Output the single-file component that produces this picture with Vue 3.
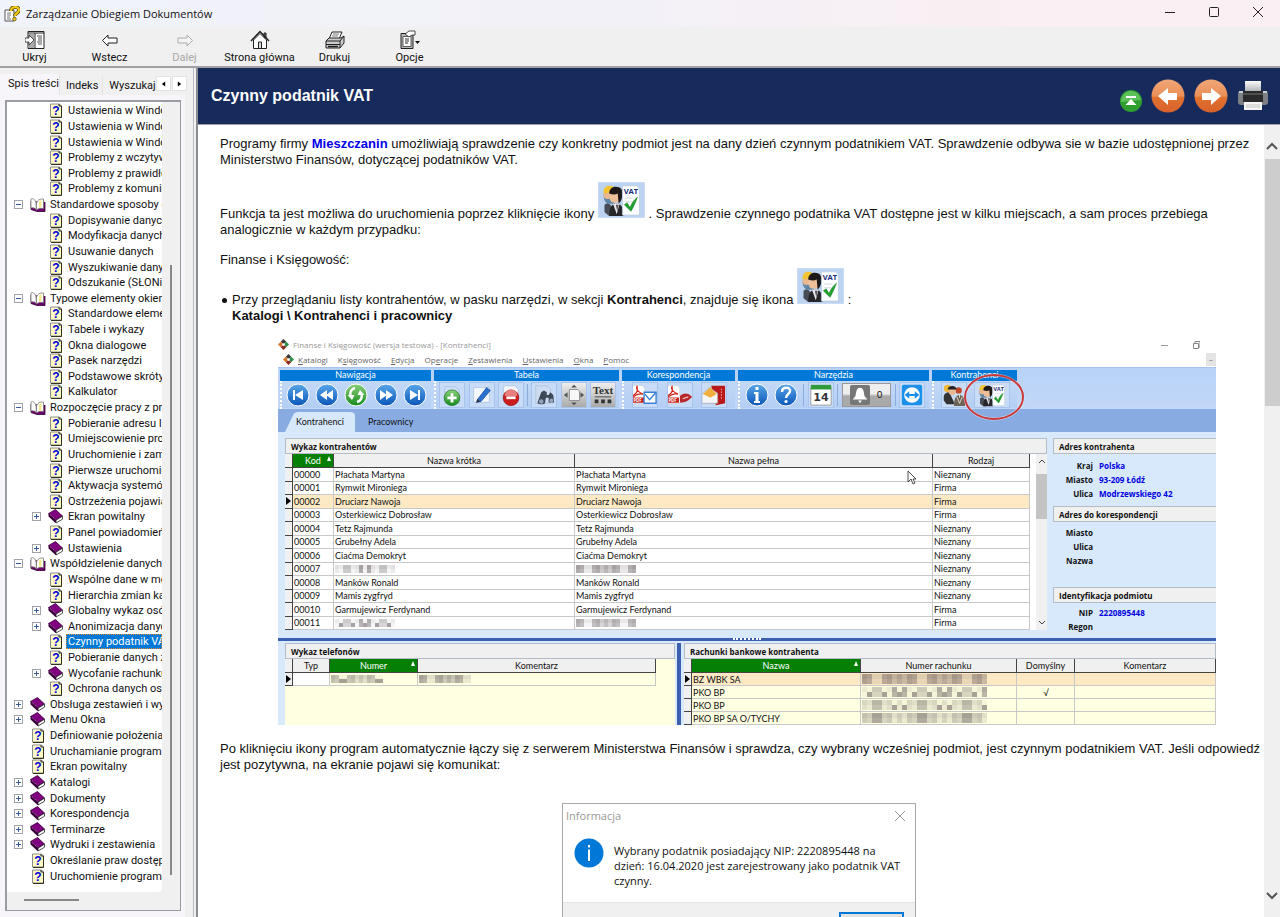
<template>
  <div class="window">
    <svg class="sprite" width="0" height="0" aria-hidden="true">
      <defs>
        <linearGradient id="g-blue" x1="0" y1="0" x2="0" y2="1">
          <stop offset="0" stop-color="#5aa7ea" />
          <stop offset="1" stop-color="#0a55b8" />
        </linearGradient>
        <linearGradient id="g-green" x1="0" y1="0" x2="0" y2="1">
          <stop offset="0" stop-color="#8bd07a" />
          <stop offset="1" stop-color="#148a1c" />
        </linearGradient>
        <linearGradient id="g-orange" x1="0" y1="0" x2="0" y2="1">
          <stop offset="0" stop-color="#f0a878" />
          <stop offset="0.5" stop-color="#ea8f58" />
          <stop offset="0.55" stop-color="#e07030" />
          <stop offset="1" stop-color="#d9622a" />
        </linearGradient>
        <linearGradient id="g-metal" x1="0" y1="0" x2="0" y2="1">
          <stop offset="0" stop-color="#fafafa" />
          <stop offset="1" stop-color="#a4a8ac" />
        </linearGradient>
      </defs>
      <symbol id="i-page" viewBox="0 0 16 15">
        <path d="M2.500 1h9l2 2v11h-11z" fill="#fffbc4" stroke="#8c8c8c" />
        <path d="M13.500 3v11.500H3" fill="none" stroke="#33331c" />
        <path d="M11 1v2h2.500" fill="none" stroke="#222" />
        <text x="8" y="12" text-anchor="middle" font-family="Liberation Sans, sans-serif" font-size="12" font-weight="700" fill="#0000d8">?</text>
      </symbol>
      <symbol id="i-book" viewBox="0 0 16 15">
        <path d="M0.500 4.500L7.500 .5l7 6.500L8 11z" fill="#800080" stroke="#3a003a" stroke-width="0.800" />
        <path d="M.5 4.500v3L7.500 14l.8-.5V11z" fill="#3a003a" />
        <path d="M8 11.200l6.500-4v3L8 14z" fill="#fff" stroke="#222" stroke-width="0.800" />
        <path d="M2 5.500l6 5" stroke="#c080c0" stroke-width="0.800" stroke-dasharray="1 1" />
      </symbol>
      <symbol id="i-open" viewBox="0 0 16 15">
        <path d="M1 4v8.500l6 2h8V5" fill="#700070" stroke="#300030" stroke-width="0.800" />
        <path d="M1 2c2-1 4.500.5 5 4l.5 7C5.500 11 3.500 10.500 1 11z" fill="#fff" stroke="#777" stroke-width="0.800" />
        <path d="M6.500 13V6C7.500 3 10 1.500 13.500 2v9.500c-3-.5-5.500 0-7 1.500z" fill="#fff" stroke="#777" stroke-width="0.800" />
        <path d="M9 4.500l2.500-1.500v7L9 11z" fill="#f3e88a" />
      </symbol>
      <symbol id="i-vat" viewBox="0 0 44 36">
        <path d="M3 12c0 5 1 8 4 10h8V10z" fill="#5f86a4" />
        <circle cx="7" cy="13" r="4" fill="#e8b890" />
        <path d="M3 9c0-4 3-6 6-6s5 1 5 3l-5 4-6 1z" fill="#f2c431" />
        <path d="M4 23c2-2 5-2 7 1l2 11H9l-5-4z" fill="#484c54" />
        <path d="M9 35c0-9 2-13 8-13 5 0 7 4 7 13z" fill="#26262a" />
        <path d="M13 22l4 11 3-11z" fill="#e8e8ee" />
        <path d="M16 23l1.500 7 1.500-7z" fill="#555" />
        <circle cx="15" cy="15" r="6" fill="#eec09a" />
        <path d="M9 11c0-5 4-7 7-7 5 0 8 3 7 10-1 4-2 6-4 8l-1-11c-3 2-6 1-9 0z" fill="#1d1919" />
        <path d="M23 3h15l3 3v28H23z" fill="#fdfeff" stroke="#b8c8dc" stroke-width="0.800" />
        <path d="M26 16h8M26 20h7M26 24h4" stroke="#d0d6de" />
        <text x="32" y="12" text-anchor="middle" font-family="Open Sans, sans-serif" font-size="8" font-weight="700" fill="#1a2f7a">VAT</text>
        <path d="M25 23l3-2 3 5c2-5 4-8 8-11-2 5-4 10-7 15z" fill="#1fa32c" stroke="#0c7018" stroke-width="0.500" />
      </symbol>
      <symbol id="i-pdf" viewBox="0 0 28 26">
        <path d="M2 2h12l3 3v18H2z" fill="#fdfdfd" stroke="#c8c8d0" stroke-width="0.700" />
        <path d="M4 13c4-2 5-6 4-10-2 2 1 7 7 9-5-1-9 1-11 3z" fill="none" stroke="#d0281c" stroke-width="1.300" />
        <path d="M1 16h15v6H1z" fill="#c8201c" />
        <text x="8.500" y="21" text-anchor="middle" font-family="Open Sans, sans-serif" font-size="5" font-weight="700" fill="#fff">PDF</text>
      </symbol>
      <symbol id="i-logo" viewBox="0 0 12 12">
        <path d="M6 0l3 3-3 3-3-3z" fill="#3a3a3a" />
        <path d="M9 3l3 3-3 3-3-3z" fill="#2f8f4a" />
        <path d="M3 3l3 3-3 3-3-3z" fill="#d8762a" />
        <path d="M6 6l3 3-3 3-3-3z" fill="#8c2c22" />
        <circle cx="6" cy="6" r="1.500" fill="#fff" />
      </symbol>
    </svg>

    <header class="titlebar">
      <svg class="app-icon" viewBox="0 0 16 16">
        <path d="M1 4h9v11H1z" fill="#fff" stroke="#555" />
        <path d="M3 7h4M3 9h4M3 11h3M3 13h4" stroke="#777" />
        <path d="M7 5c0-5 8-5 8-1 0 3-4 3-4 6" fill="none" stroke="#5c4a00" stroke-width="3.600" />
        <path d="M7 5c0-5 8-5 8-1 0 3-4 3-4 6" fill="none" stroke="#f0c818" stroke-width="2.200" />
        <circle cx="10.500" cy="13" r="1.800" fill="#f0c818" stroke="#5c4a00" stroke-width="0.700" />
      </svg>
      <span class="title">Zarządzanie Obiegiem Dokumentów</span>
      <div class="win-buttons">
        <button type="button" aria-label="Minimalizuj">
          <svg viewBox="0 0 12 12"><path d="M1 6.500h10" stroke="#222" /></svg>
        </button>
        <button type="button" aria-label="Maksymalizuj">
          <svg viewBox="0 0 12 12"><rect x="1.500" y="1.500" width="9" height="9" rx="1" fill="none" stroke="#222" /></svg>
        </button>
        <button type="button" aria-label="Zamknij">
          <svg viewBox="0 0 12 12"><path d="M1 1l10 10M11 1L1 11" stroke="#222" /></svg>
        </button>
      </div>
    </header>

    <nav class="toolbar">
      <button v-for="b in toolButtons" :key="b.id" type="button" class="tool" :disabled="b.disabled">
        <svg v-if="b.id === 'hide'" viewBox="0 0 20 20">
          <path d="M3 1.500h16v17H3z" fill="#fff" stroke="#222" />
          <path d="M3 3h16" stroke="#222" />
          <path d="M4 4h5v14H4z" fill="#aaa" />
          <path d="M10 3v15" stroke="#222" />
          <path d="M12 6h5M13 8h4M13 10h4M12 12h5M13 14h4" stroke="#555" />
          <path d="M0 8h4V5l5 5-5 5v-3H0z" fill="#fff" stroke="#222" stroke-width="0.800" />
        </svg>
        <svg v-else-if="b.id === 'back'" viewBox="0 0 20 20">
          <path d="M8 5v3h9v5H8v3l-5.500-5.500z" fill="#fff" stroke="#222" />
        </svg>
        <svg v-else-if="b.id === 'forward'" viewBox="0 0 20 20">
          <path d="M12 5v3H3v5h9v3l5.500-5.500z" fill="#f4f4f4" stroke="#aaa" />
        </svg>
        <svg v-else-if="b.id === 'home'" viewBox="0 0 20 20">
          <path d="M14 3h2v5h-2z" fill="#777" stroke="#222" />
          <path d="M3.500 10v8.500h13V10L10 3.500z" fill="#fff" stroke="#222" />
          <path d="M1 11l9-9.500L19 11" fill="none" stroke="#222" stroke-width="1.500" />
          <path d="M8.500 18v-6h3v6" fill="#ddd" stroke="#222" />
        </svg>
        <svg v-else-if="b.id === 'print'" viewBox="0 0 20 20">
          <path d="M7 2h10l-3 7H4z" fill="#fff" stroke="#222" />
          <path d="M8 4h6M7 6h6" stroke="#777" />
          <path d="M1 11l3-3h12l3-2v7l-4 5H1z" fill="#ccc" stroke="#222" />
          <path d="M1 11h14l4-5M15 11v7M1 14.500h14" fill="none" stroke="#222" />
          <path d="M3 16.500h10" stroke="#222" stroke-width="1.500" />
        </svg>
        <svg v-else viewBox="0 0 20 20">
          <path d="M1 3.500h12v15H1z" fill="#bbb" stroke="#222" />
          <path d="M3 6.500h8v10H3z" fill="#fff" stroke="#222" stroke-width="0.700" />
          <path d="M5 9h4M5 11h4M5 13h3" stroke="#333" />
          <path d="M5 4l4-3h6v4h-3l-3 2z" fill="#fff" stroke="#222" stroke-width="0.800" />
          <path d="M15 11h5l-2.500 3z" fill="#111" />
        </svg>
        <span>{{ b.label }}</span>
      </button>
    </nav>

    <div class="body">
      <aside class="sidebar">
        <div class="tabs">
          <button type="button" class="tab active">Spis treści</button>
          <button type="button" class="tab">Indeks</button>
          <button type="button" class="tab">Wyszukaj</button>
          <div class="tab-scroll">
            <button type="button" aria-label="W lewo"><svg viewBox="0 0 6 6"><path d="M5 0v6L1 3z" /></svg></button>
            <button type="button" aria-label="W prawo"><svg viewBox="0 0 6 6"><path d="M1 0v6l4-3z" /></svg></button>
          </div>
        </div>
        <div class="tab-panel">
          <div class="tree-box">
            <ul class="tree">
              <li
                v-for="(n, i) in tree"
                :key="i"
                :class="['node', 'level-' + n.level, { selected: n.selected }]"
              >
                <button v-if="n.kind !== 'page'" type="button" class="expander" :aria-label="n.kind === 'open' ? 'Zwiń' : 'Rozwiń'">
                  <svg viewBox="0 0 7 7">
                    <path d="M1 3.500h5" stroke="#3a5a9a" />
                    <path v-if="n.kind === 'book'" d="M3.500 1v5" stroke="#3a5a9a" />
                  </svg>
                </button>
                <span v-else class="no-expander"></span>
                <svg class="node-icon"><use :href="'#i-' + n.kind" /></svg>
                <span class="node-label">{{ n.text }}</span>
              </li>
            </ul>
            <div class="tree-vscroll"><div class="vthumb"></div></div>
            <div class="tree-hscroll"><div class="hthumb"></div></div>
          </div>
        </div>
      </aside>
      <div class="splitter"></div>

      <main class="main">
        <div class="topic-bar">
          <h1>Czynny podatnik VAT</h1>
          <div class="topic-nav">
            <a href="#" aria-label="Do góry" class="small">
              <svg viewBox="0 0 22 22">
                <circle cx="11" cy="11" r="11" fill="#2f9e2f" />
                <path d="M1 12a10 10 0 0 1 20-2z" fill="#5cc05a" />
                <path d="M6 6h10v2H6zM11 9l5.500 6h-11z" fill="#fff" />
              </svg>
            </a>
            <a href="#" aria-label="Poprzedni">
              <svg viewBox="0 0 34 34">
                <circle cx="17" cy="17" r="16.500" fill="url(#g-orange)" />
                <path d="M7 17l10-8v5h9v7h-9v5z" fill="#fff" />
              </svg>
            </a>
            <a href="#" aria-label="Następny">
              <svg viewBox="0 0 34 34">
                <circle cx="17" cy="17" r="16.500" fill="url(#g-orange)" />
                <path d="M27 17l-10-8v5H8v7h9v5z" fill="#fff" />
              </svg>
            </a>
            <a href="#" aria-label="Drukuj temat" class="print">
              <svg viewBox="0 0 32 32">
                <path d="M8 1h16v12H8z" fill="url(#g-metal)" />
                <rect x="1" y="11" width="30" height="14" rx="3" fill="#7c8084" />
                <path d="M6 11h20v11H6z" fill="#2a2a2c" />
                <path d="M6 14h20" stroke="#777" />
                <path d="M2 12h4M26 12h4" stroke="#c8ccd0" stroke-width="2" />
                <path d="M7 22h18v8H7z" fill="#f4f4f4" />
                <path d="M9 25h14M9 27h14" stroke="#c4c4c4" />
              </svg>
            </a>
          </div>
        </div>

        <div class="topic">
          <article class="content">
            <p>
              Programy firmy <a href="#">Mieszczanin</a> umożliwiają sprawdzenie czy konkretny podmiot jest na dany
              dzień czynnym podatnikiem VAT. Sprawdzenie odbywa sie w bazie udostępnionej przez
              <br />Ministerstwo Finansów, dotyczącej podatników VAT.
            </p>
            <p class="lead">
              Funkcja ta jest możliwa do uruchomienia poprzez kliknięcie ikony
              <span class="vat-icon"><svg><use href="#i-vat" /></svg></span>
              . Sprawdzenie czynnego podatnika VAT dostępne jest w kilku miejscach, a sam proces przebiega
              <br />analogicznie w każdym przypadku:
            </p>
            <p class="lead">Finanse i Księgowość:</p>
            <ul class="steps">
              <li>
                Przy przeglądaniu listy kontrahentów, w pasku narzędzi, w sekcji <b>Kontrahenci</b>, znajduje się ikona
                <span class="vat-icon"><svg><use href="#i-vat" /></svg></span>
                :<br /><b>Katalogi \ Kontrahenci i pracownicy</b>
              </li>
            </ul>

            <figure class="shot">
              <div class="shot-title">
                <svg class="logo"><use href="#i-logo" /></svg>
                <span>Finanse i Księgowość (wersja testowa) - [Kontrahenci]</span>
                <svg class="shot-win" viewBox="0 0 40 8">
                  <path d="M1 4.500h7" stroke="#999" />
                  <path d="M33.500 2.500h5v5h-5zM35 2V.500h5V6h-1.500" fill="none" stroke="#888" />
                </svg>
              </div>
              <div class="shot-menu">
                <svg class="logo"><use href="#i-logo" /></svg>
                <span v-for="m in menu" :key="m.text">{{ m.pre }}<u>{{ m.key }}</u>{{ m.text }}</span>
                <i class="mdi-min">–</i>
              </div>

              <div class="ribbon">
                <section v-for="g in groups" :key="g.name" :class="['group', g.cls]">
                  <h2>{{ g.name }}</h2>
                  <div class="icons">
                    <template v-for="ic in g.icons" :key="ic">
                      <span v-if="ic.startsWith('sep')" class="sep"></span>
                      <span v-else-if="ic === 'bell'" class="bell">
                        <svg viewBox="0 0 24 22">
                          <rect x="1" y="0" width="22" height="22" rx="2" fill="#777" />
                          <path d="M12 3c4 0 4 4 5 9l3 4H4l3-4c1-5 1-9 5-9zM10 17h4l-2 3z" fill="#fff" />
                        </svg>
                        0
                      </span>
                      <svg v-else-if="ic === 'vat'" class="ric plate wide"><use href="#i-vat" /></svg>
                      <svg v-else :class="['ric', { plate: !rounds.includes(ic), grey: ic === 'fit' || ic === 'text' }]" viewBox="0 0 26 26">
                        <template v-if="ic === 'refresh'">
                          <circle cx="13" cy="13" r="11" fill="url(#g-green)" stroke="#fff" />
                          <path d="M12 6c-4 1-6 5-4 9M14 20c4-1 6-5 4-9" fill="none" stroke="#fff" stroke-width="2.400" />
                          <path d="M4.500 13h7L9 18zM21.500 13h-7L17 8z" fill="#fff" />
                        </template>
                        <template v-else-if="rounds.includes(ic)">
                          <circle cx="13" cy="13" r="11" fill="url(#g-blue)" stroke="#fff" />
                          <path v-if="ic === 'first'" d="M8 8h2v10H8zM18 8v10l-8-5z" fill="#fff" />
                          <path v-if="ic === 'prev'" d="M13 8v10l-7-5zM19 8v10l-7-5z" fill="#fff" />
                          <path v-if="ic === 'next'" d="M13 8v10l7-5zM7 8v10l7-5z" fill="#fff" />
                          <path v-if="ic === 'last'" d="M16 8h2v10h-2zM8 8v10l8-5z" fill="#fff" />
                          <path v-if="ic === 'info'" d="M11.500 5h3v3h-3zM10 10h4.500v9H16v2h-6v-2h1.500v-7H10z" fill="#fff" />
                          <template v-if="ic === 'help'">
                            <path d="M9 10c0-6 9-5 8-1 0 3-4 3-4 7" fill="none" stroke="#fff" stroke-width="2.500" />
                            <circle cx="13" cy="19.500" r="1.600" fill="#fff" />
                          </template>
                        </template>
                        <template v-else-if="ic === 'add'">
                          <path d="M5 4h12l4 4v14H5z" fill="#c8dcf4" stroke="#b4c8e4" />
                          <circle cx="13" cy="16" r="8.500" fill="url(#g-green)" stroke="#16701a" stroke-width="0.700" />
                          <path d="M11.500 11h3v3.500H18v3h-3.500V21h-3v-3.500H8v-3h3.500z" fill="#fff" />
                        </template>
                        <template v-else-if="ic === 'edit'">
                          <path d="M4 5h17v16H4z" fill="#f4f8fc" stroke="#b4c8e4" />
                          <path d="M8 18L18 5l4 3-10 12-5 1z" fill="#2a70d0" stroke="#10408c" stroke-width="0.700" />
                          <path d="M7 21l1-4 3 3z" fill="#333" />
                        </template>
                        <template v-else-if="ic === 'del'">
                          <path d="M5 3h12l4 4v8H5z" fill="#f4f8fc" stroke="#b4c8e4" />
                          <circle cx="13" cy="16" r="8.500" fill="#cc1c1c" stroke="#8c0c0c" stroke-width="0.700" />
                          <path d="M6 14a7 7 0 0 1 14 0z" fill="#e88080" />
                          <path d="M8 14.500h10v3H8z" fill="#fff" />
                        </template>
                        <template v-else-if="ic === 'find'">
                          <path d="M4 3h13l3 3v16H4z" fill="#cddcf0" stroke="#b4c4dc" />
                          <path d="M6 21l4-11 3-2 3 2v3h2l2-3 3 3 1 8h-6v-5h-3l-1 6c-2 2-8 1-8-1z" fill="#3c4858" />
                          <circle cx="10" cy="20" r="2.500" fill="#90a4bc" />
                          <circle cx="21" cy="19" r="2.200" fill="#90a4bc" />
                        </template>
                        <template v-else-if="ic === 'fit'">
                          <path d="M8 7h9l2 2v10H8z" fill="#f8f8f8" stroke="#888" />
                          <path d="M13 2l3 3h-6zM13 24l3-3h-6zM2 13l4-3v6zM24 13l-4-3v6z" fill="#555" />
                        </template>
                        <template v-else-if="ic === 'text'">
                          <text x="13" y="12" text-anchor="middle" font-family="Liberation Serif, serif" font-size="12" font-weight="700" fill="#333">Text</text>
                          <path d="M4 15h18" stroke="#444" />
                          <path d="M4 18h4v4H4zM11 18h4v4h-4zM18 18h4v4h-4z" fill="#333" />
                        </template>
                        <template v-else-if="ic === 'pdfmail'">
                          <use href="#i-pdf" width="26" height="26" x="-3" />
                          <path d="M12 10h13v12H12z" fill="#fff" stroke="#3a80d8" stroke-width="1.500" />
                          <path d="M13 12l5 6 7-8" fill="none" stroke="#3a80d8" stroke-width="1.500" />
                        </template>
                        <template v-else-if="ic === 'pdfsend'">
                          <use href="#i-pdf" width="26" height="26" x="-3" />
                          <path d="M13 14c5-4 9-3 13 1-3 4-8 7-13 6z" fill="#b82828" />
                          <path d="M16 17l6-2" stroke="#fff" />
                        </template>
                        <template v-else-if="ic === 'mail'">
                          <path d="M10 3l15 0v19l-10 2z" fill="#b81818" />
                          <path d="M21 6v12" stroke="#f0a0a0" stroke-dasharray="2 1" />
                          <path d="M0 12l8-7 9 6v11H0z" fill="#f6f6f8" stroke="#999" stroke-width="0.700" />
                          <path d="M1 12l8-7 7 7-7 4z" fill="#f0b040" />
                        </template>
                        <template v-else-if="ic === 'calendar'">
                          <path d="M2 5h22v19H2z" fill="#fff" stroke="#999" />
                          <path d="M2 2h22v5H2z" fill="#2f9a3c" />
                          <text x="13" y="19" text-anchor="middle" font-family="DejaVu Sans, sans-serif" font-size="12" font-weight="700" fill="#333">14</text>
                        </template>
                        <template v-else-if="ic === 'remote'">
                          <rect x="2" y="2" width="22" height="22" rx="2" fill="#1c8fe8" />
                          <circle cx="13" cy="13" r="8.500" fill="#fff" />
                          <path d="M5 13l5-4v3h6V9l5 4-5 4v-3h-6v3z" fill="#1c8fe8" />
                        </template>
                        <template v-else>
                          <circle cx="6" cy="6" r="4" fill="#f0b838" />
                          <circle cx="18" cy="8" r="3.500" fill="#c04828" />
                          <path d="M2 19c-1-7 2-9 6-9l6 13H5z" fill="#333" />
                          <circle cx="11" cy="9" r="4" fill="#e8b890" />
                          <path d="M6 7c1-5 9-5 10 0z" fill="#222" />
                          <path d="M13 25c0-8 2-12 6-12s6 4 6 12z" fill="#6c6458" />
                          <path d="M16 15l3 7 3-7M19 12v4" fill="none" stroke="#e8e0d0" />
                        </template>
                      </svg>
                    </template>
                  </div>
                </section>
                <svg class="mark" viewBox="0 0 62 48">
                  <ellipse cx="31" cy="24" rx="29" ry="22" fill="none" stroke="#fff" stroke-width="3" opacity="0.500" />
                  <ellipse cx="31" cy="24" rx="29" ry="22" fill="none" stroke="#c83a3a" stroke-width="2" />
                </svg>
              </div>

              <div class="shot-tabs">
                <button type="button" class="on">
                  <svg viewBox="0 0 68 20" preserveAspectRatio="none"><path d="M0 20L8 3q1-3 5-3h50q5 0 5 4v16z" fill="#d8e8fb" /></svg>
                  <span>Kontrahenci</span>
                </button>
                <button type="button">Pracownicy</button>
              </div>

              <div class="upper">
                <div class="panel clients">
                  <h3>Wykaz kontrahentów</h3>
                  <div class="clients-body">
                    <table class="grid">
                      <colgroup><col class="w-mark" /><col class="w-code" /><col class="w-short" /><col /><col class="w-kind" /></colgroup>
                      <thead>
                        <tr><th></th><th class="sorted">Kod</th><th>Nazwa krótka</th><th>Nazwa pełna</th><th>Rodzaj</th></tr>
                      </thead>
                      <tbody>
                        <tr v-for="(c, i) in clients" :key="c.name + i" :class="{ current: i === 2 }">
                          <td class="mk"><svg v-if="i === 2" viewBox="0 0 5 8"><path d="M0 0l5 4-5 4z" /></svg></td>
                          <td>{{ String(i).padStart(5, '0') }}</td>
                          <td v-for="k in 2" :key="k">
                            <template v-if="c.name">{{ c.name }}</template>
                            <svg v-else class="mosaic" width="60" height="8" viewBox="0 0 60 8">
                              <rect v-for="m in mosaic(15, 2, i + k * 3)" :key="m.id" :x="m.x * 4" :y="m.y * 4" width="4" height="4" :fill="m.fill" />
                            </svg>
                          </td>
                          <td>{{ c.kind }}</td>
                        </tr>
                      </tbody>
                    </table>
                    <div class="vbar">
                      <svg viewBox="0 0 8 5"><path d="M1 4l3-3 3 3" /></svg>
                      <div class="vbar-thumb"></div>
                      <svg viewBox="0 0 8 5"><path d="M1 1l3 3 3-3" /></svg>
                    </div>
                    <svg class="cursor" viewBox="0 0 10 15"><path d="M1 1v11l3-3 2 5 2-1-2-4h3z" fill="#fff" stroke="#222" stroke-width="0.800" /></svg>
                  </div>
                </div>
                <div class="panel details">
                  <template v-for="d in details" :key="d.title">
                    <h3>{{ d.title }}</h3>
                    <dl :class="d.cls">
                      <template v-for="r in d.rows" :key="r[0]">
                        <dt>{{ r[0] }}</dt>
                        <dd>{{ r[1] }}</dd>
                      </template>
                    </dl>
                  </template>
                </div>
              </div>

              <div class="hsplit"><i></i></div>

              <div class="lower">
                <div class="panel phones">
                  <h3>Wykaz telefonów</h3>
                  <table class="grid">
                    <colgroup><col class="w-mark" /><col class="w-type" /><col class="w-num" /><col /></colgroup>
                    <thead>
                      <tr><th></th><th>Typ</th><th class="sorted">Numer</th><th>Komentarz</th></tr>
                    </thead>
                    <tbody>
                      <tr>
                        <td class="mk"><svg viewBox="0 0 5 8"><path d="M0 0l5 4-5 4z" /></svg></td>
                        <td class="white"></td>
                        <td v-for="k in 2" :key="k">
                          <svg class="mosaic" width="52" height="8" viewBox="0 0 52 8">
                            <rect v-for="m in mosaic(13, 2, k + 20)" :key="m.id" :x="m.x * 4" :y="m.y * 4" width="4" height="4" :fill="m.fill" />
                          </svg>
                        </td>
                      </tr>
                    </tbody>
                  </table>
                </div>
                <div class="vsplit"></div>
                <div class="panel accounts">
                  <h3>Rachunki bankowe kontrahenta</h3>
                  <table class="grid">
                    <colgroup><col class="w-mark" /><col class="w-bank" /><col class="w-acc" /><col class="w-def" /><col /></colgroup>
                    <thead>
                      <tr><th></th><th class="sorted">Nazwa</th><th>Numer rachunku</th><th>Domyślny</th><th>Komentarz</th></tr>
                    </thead>
                    <tbody>
                      <tr v-for="(b, i) in banks" :key="i" :class="{ current: i === 0 }">
                        <td class="mk"><svg v-if="i === 0" viewBox="0 0 5 8"><path d="M0 0l5 4-5 4z" /></svg></td>
                        <td>{{ b }}</td>
                        <td>
                          <svg class="mosaic" width="125" height="10" viewBox="0 0 125 10">
                            <rect v-for="m in mosaic(25, 2, i + 40)" :key="m.id" :x="m.x * 5" :y="m.y * 5" width="5" height="5" :fill="m.fill" />
                          </svg>
                        </td>
                        <td class="tick">{{ i === 1 ? '√' : '' }}</td>
                        <td></td>
                      </tr>
                    </tbody>
                  </table>
                </div>
              </div>
            </figure>

            <p class="after">
              Po kliknięciu ikony program automatycznie łączy się z serwerem Ministerstwa Finansów i sprawdza, czy
              wybrany wcześniej podmiot, jest czynnym podatnikiem VAT. Jeśli odpowiedź
              <br />jest pozytywna, na ekranie pojawi się komunikat:
            </p>

            <div class="dialog">
              <div class="dialog-title">
                <span>Informacja</span>
                <svg viewBox="0 0 12 12"><path d="M1 1l10 10M11 1L1 11" stroke="#999" /></svg>
              </div>
              <div class="dialog-body">
                <svg viewBox="0 0 30 30">
                  <circle cx="15" cy="15" r="14.500" fill="#0078d7" />
                  <path d="M14 7h2v2.500h-2zM14 11.500h2V23h-2z" fill="#fff" />
                </svg>
                <p>Wybrany podatnik posiadający NIP: 2220895448 na<br />dzień: 16.04.2020 jest zarejestrowany jako podatnik VAT<br />czynny.</p>
              </div>
              <div class="dialog-foot"><button type="button" aria-label="OK"></button></div>
            </div>
          </article>

          <div class="scrollbar">
            <svg viewBox="0 0 12 8"><path d="M1 7l5-5 5 5" /></svg>
            <div class="thumb"></div>
            <svg viewBox="0 0 12 8"><path d="M1 1l5 5 5-5" /></svg>
          </div>
        </div>
      </main>
    </div>
  </div>
</template>

<script setup>
const toolButtons = [
  { id: 'hide', label: 'Ukryj' },
  { id: 'back', label: 'Wstecz' },
  { id: 'forward', label: 'Dalej', disabled: true },
  { id: 'home', label: 'Strona główna' },
  { id: 'print', label: 'Drukuj' },
  { id: 'options', label: 'Opcje' },
]

const node = (level, kind, text, selected = false) => ({ level, kind, text, selected })

const tree = [
  node(1, 'page', 'Ustawienia w Windows'),
  node(1, 'page', 'Ustawienia w Windows'),
  node(1, 'page', 'Ustawienia w Windows'),
  node(1, 'page', 'Problemy z wczytywaniem'),
  node(1, 'page', 'Problemy z prawidłowym'),
  node(1, 'page', 'Problemy z komunikacją'),
  node(0, 'open', 'Standardowe sposoby obsługi'),
  node(1, 'page', 'Dopisywanie danych'),
  node(1, 'page', 'Modyfikacja danych'),
  node(1, 'page', 'Usuwanie danych'),
  node(1, 'page', 'Wyszukiwanie danych'),
  node(1, 'page', 'Odszukanie (SŁONiK)'),
  node(0, 'open', 'Typowe elementy okien'),
  node(1, 'page', 'Standardowe elementy'),
  node(1, 'page', 'Tabele i wykazy'),
  node(1, 'page', 'Okna dialogowe'),
  node(1, 'page', 'Pasek narzędzi'),
  node(1, 'page', 'Podstawowe skróty'),
  node(1, 'page', 'Kalkulator'),
  node(0, 'open', 'Rozpoczęcie pracy z programem'),
  node(1, 'page', 'Pobieranie adresu IP'),
  node(1, 'page', 'Umiejscowienie programu'),
  node(1, 'page', 'Uruchomienie i zamknięcie'),
  node(1, 'page', 'Pierwsze uruchomienie'),
  node(1, 'page', 'Aktywacja systemów'),
  node(1, 'page', 'Ostrzeżenia pojawiające'),
  node(1, 'book', 'Ekran powitalny'),
  node(1, 'page', 'Panel powiadomień'),
  node(1, 'book', 'Ustawienia'),
  node(0, 'open', 'Współdzielenie danych'),
  node(1, 'page', 'Wspólne dane w module'),
  node(1, 'page', 'Hierarchia zmian katalogów'),
  node(1, 'book', 'Globalny wykaz osób'),
  node(1, 'book', 'Anonimizacja danych'),
  node(1, 'page', 'Czynny podatnik VAT', true),
  node(1, 'page', 'Pobieranie danych z'),
  node(1, 'book', 'Wycofanie rachunku'),
  node(1, 'page', 'Ochrona danych osobowych'),
  node(0, 'book', 'Obsługa zestawień i wydruków'),
  node(0, 'book', 'Menu Okna'),
  node(0, 'page', 'Definiowanie położenia'),
  node(0, 'page', 'Uruchamianie programu'),
  node(0, 'page', 'Ekran powitalny'),
  node(0, 'book', 'Katalogi'),
  node(0, 'book', 'Dokumenty'),
  node(0, 'book', 'Korespondencja'),
  node(0, 'book', 'Terminarze'),
  node(0, 'book', 'Wydruki i zestawienia'),
  node(0, 'page', 'Określanie praw dostępu'),
  node(0, 'page', 'Uruchomienie programu'),
]

const menu = [
  { pre: '', key: 'K', text: 'atalogi' },
  { pre: 'K', key: 's', text: 'ięgowość' },
  { pre: '', key: 'E', text: 'dycja' },
  { pre: 'Op', key: 'e', text: 'racje' },
  { pre: '', key: 'Z', text: 'estawienia' },
  { pre: '', key: 'U', text: 'stawienia' },
  { pre: '', key: 'O', text: 'kna' },
  { pre: '', key: 'P', text: 'omoc' },
]

const groups = [
  { name: 'Nawigacja', cls: 'g-nav', icons: ['first', 'prev', 'refresh', 'next', 'last'] },
  { name: 'Tabela', cls: 'g-table', icons: ['add', 'edit', 'del', 'sep', 'find', 'fit', 'text'] },
  { name: 'Korespondencja', cls: 'g-mail', icons: ['pdfmail', 'pdfsend', 'mail'] },
  { name: 'Narzędzia', cls: 'g-tools', icons: ['info', 'help', 'sep1', 'calendar', 'sep2', 'bell', 'sep3', 'remote'] },
  { name: 'Kontrahenci', cls: 'g-people', icons: ['people', 'vat'] },
]
const rounds = ['first', 'prev', 'refresh', 'next', 'last', 'info', 'help']

const clients = [
  { name: 'Płachata Martyna', kind: 'Nieznany' },
  { name: 'Rymwit Mironiega', kind: 'Firma' },
  { name: 'Druciarz Nawoja', kind: 'Firma' },
  { name: 'Osterkiewicz Dobrosław', kind: 'Firma' },
  { name: 'Tetz Rajmunda', kind: 'Nieznany' },
  { name: 'Grubełny Adela', kind: 'Nieznany' },
  { name: 'Ciaćma Demokryt', kind: 'Nieznany' },
  { name: '', kind: 'Nieznany' },
  { name: 'Manków Ronald', kind: 'Nieznany' },
  { name: 'Mamis zygfryd', kind: 'Nieznany' },
  { name: 'Garmujewicz Ferdynand', kind: 'Firma' },
  { name: '', kind: 'Firma' },
]

const details = [
  { title: 'Adres kontrahenta', cls: 'd-addr', rows: [['Kraj', 'Polska'], ['Miasto', '93-209 Łódź'], ['Ulica', 'Modrzewskiego 42']] },
  { title: 'Adres do korespondencji', cls: 'd-mail', rows: [['Miasto', ''], ['Ulica', ''], ['Nazwa', '']] },
  { title: 'Identyfikacja podmiotu', cls: 'd-id', rows: [['NIP', '2220895448'], ['Regon', '']] },
]

const banks = ['BZ WBK SA', 'PKO BP', 'PKO BP', 'PKO BP SA O/TYCHY']

// zamazane dane osobowe: siatka szarych kafelków
const mosaic = (cols, rows, seed) => {
  const cells = []
  for (let y = 0; y < rows; y++) {
    for (let x = 0; x < cols; x++) {
      const n = (x * 37 + y * 17 + seed * 29 + x * x * 7) % 9
      const alpha = (n + 1) * 6
      cells.push({ id: y * cols + x, x, y, fill: `rgb(90 80 85 / ${alpha}%)` })
    }
  }
  return cells
}
</script>

<style>
body {
  margin: 0;
}
</style>

<style scoped>
* {
  box-sizing: border-box;
}

button {
  font: inherit;
  color: inherit;
  background: none;
  border: 0;
  padding: 0;
}

h1, h2, h3, p, ul, dl, dd, figure {
  margin: 0;
  padding: 0;
}

.sprite {
  position: absolute;
}

.window {
  display: flex;
  flex-direction: column;
  height: 100vh;
  overflow: hidden;
  background: #f0f0f0;
  font-family: Roboto, "Liberation Sans", Arial, sans-serif;
  font-size: 11px;
  color: #111;
}

/* pasek tytułu */
.titlebar {
  display: flex;
  flex: none;
  align-items: center;
  height: 27px;
  padding-left: 4px;
  background: linear-gradient(90deg, #f0f3fa 0%, #f3f1f8 50%, #faeff2 80%);
  font-family: "Open Sans", "Noto Sans", sans-serif;
}

.app-icon {
  width: 16px;
  height: 16px;
  margin-right: 6px;
}

.title {
  flex: 1;
}

.win-buttons {
  display: flex;
}

.win-buttons button {
  width: 44px;
  height: 24px;
}

.win-buttons svg {
  width: 12px;
  height: 12px;
}

/* pasek narzędzi */
.toolbar {
  display: flex;
  flex: none;
  height: 41px;
  margin-left: -3px;
  border-bottom: 2px solid #a0a0a0;
}

.tool {
  display: flex;
  flex-direction: column;
  align-items: center;
  width: 75px;
  padding-top: 3px;
  white-space: nowrap;
}

.tool svg {
  width: 20px;
  height: 20px;
}

.tool span {
  line-height: 16px;
}

.tool:disabled {
  color: #a8a8a8;
}

.body {
  display: flex;
  flex: 1;
  min-height: 0;
}

/* lewy panel */
.sidebar {
  display: flex;
  flex-direction: column;
  flex: none;
  width: 193px;
  padding: 6px 8px 0 0;
}

.tabs {
  display: flex;
  align-items: flex-end;
  height: 21px;
}

.tab {
  flex: none;
  height: 19px;
  padding: 0 4px 0 6px;
  border-right: 1px solid #e4e4e4;
  white-space: nowrap;
}

.tab.active {
  height: 21px;
  padding: 0 0 2px 8px;
  background: #f7f5fa;
}

.tab:nth-child(3) {
  border-right: 0;
  padding-right: 0;
}

.tab-scroll {
  display: flex;
  align-self: flex-start;
  gap: 1px;
  margin-left: auto;
  margin-right: -2px;
}

.tab-scroll button {
  width: 15px;
  height: 15px;
  margin-top: 2px;
  background: #fff;
  border: 1px solid #e2e2e2;
}

.tab-scroll svg {
  display: block;
  width: 5px;
  height: 6px;
  margin: auto;
}

.tab-panel {
  display: flex;
  flex: 1;
  min-height: 0;
  padding: 5px 4px 6px 5px;
  background: #f7f5fa;
}

.tree-box {
  display: grid;
  flex: 1;
  grid-template-columns: 1fr 18px;
  grid-template-rows: 1fr 18px;
  min-width: 0;
  border: 2px solid #9a9ca2;
  border-right-width: 1px;
  border-bottom-width: 1px;
  background: #f0f0f0;
}

.tree {
  display: grid;
  grid-auto-rows: 1fr;
  min-width: 0;
  padding: 1px 0 8px 7px;
  overflow: hidden;
  background: #fff;
  border-bottom-right-radius: 4px;
  list-style: none;
}

.node {
  display: flex;
  align-items: center;
  min-width: 0;
  min-height: 0;
  overflow: hidden;
}

.level-1 {
  padding-left: 18px;
}

.expander,
.no-expander {
  flex: none;
  width: 9px;
  height: 9px;
  margin-right: 7px;
}

.expander {
  border: 1px solid #a0a4aa;
  background: #fff;
}

.expander svg {
  display: block;
  width: 7px;
  height: 7px;
}

.node-icon {
  flex: none;
  width: 16px;
  height: 15px;
}

.node-label {
  flex: 1;
  min-width: 0;
  margin-left: 2px;
  padding-left: 2px;
  overflow: hidden;
  line-height: 15px;
  white-space: nowrap;
}

.selected .node-label {
  background: #0078d7;
  color: #fff;
  outline: 1px dotted #e08a30;
  outline-offset: -1px;
}

.tree-vscroll {
  display: flex;
  flex-direction: column;
  align-items: center;
  padding: 163px 0 17px;
}

.vthumb {
  flex: 1;
  width: 2px;
  background: #888;
}

.tree-hscroll {
  padding: 7px 17px 0;
}

.hthumb {
  width: 55px;
  height: 2px;
  background: #888;
}

.splitter {
  flex: none;
  width: 5px;
  background: #f0f0f0;
  border-left: 1px solid #b8bcc4;
  border-right: 2px solid #8a8c92;
}

/* temat */
.main {
  display: flex;
  flex: 1;
  flex-direction: column;
  min-width: 0;
  background: #fff;
  font-family: "Liberation Sans", Arial, sans-serif;
}

.topic-bar {
  display: flex;
  flex: none;
  align-items: center;
  justify-content: space-between;
  height: 57px;
  padding: 0 11px 0 13px;
  background: #172a5c;
  border-bottom: 1px solid #a0a0a0;
  color: #fff;
}

.topic-bar h1 {
  font-size: 16px;
}

.topic-nav {
  display: flex;
  align-items: center;
  gap: 9px;
}

.topic-nav svg {
  display: block;
  width: 34px;
  height: 34px;
}

.topic-nav .small {
  padding-top: 9px;
}

.topic-nav .small svg {
  width: 22px;
  height: 22px;
}

.topic-nav .print svg {
  width: 32px;
  height: 32px;
}

.topic {
  display: flex;
  flex: 1;
  min-height: 0;
}

.content {
  flex: 1;
  min-width: 0;
  padding: 11px 0 0 22px;
  overflow: hidden;
  font-size: 13px;
  line-height: 16px;
}

.content a {
  color: #0000e8;
  font-weight: 700;
  text-decoration: none;
}

.lead {
  margin-top: 14px;
}

.after {
  margin-top: 16px;
}

.vat-icon {
  display: inline-block;
  width: 47px;
  height: 36px;
  padding: 0 1px;
  background: #bcd4f2;
  border: 1px solid #cadcf4;
  vertical-align: baseline;
}

.vat-icon svg {
  display: block;
  width: 43px;
  height: 34px;
}

.steps {
  padding-left: 12px;
  list-style: none;
}

.steps li {
  position: relative;
}

.steps li::before {
  position: absolute;
  bottom: 21px;
  left: -10px;
  width: 5px;
  height: 5px;
  border-radius: 50%;
  background: #111;
  content: "";
}

/* okno programu */
.shot {
  margin: 13px 48px 0 58px;
  overflow: hidden;
  background: #fff;
  font-family: Lato, "Open Sans", "Noto Sans", sans-serif;
  font-size: 9px;
  line-height: 12px;
}

.logo {
  width: 11px;
  height: 11px;
}

.shot-title,
.shot-menu {
  display: flex;
  align-items: center;
  height: 15px;
  font-family: "Open Sans", "Noto Sans", sans-serif;
  font-size: 8px;
}

.shot-title {
  gap: 4px;
  color: #999;
}

.shot-win {
  width: 40px;
  height: 8px;
  margin: 0 16px 0 auto;
}

.shot-menu {
  gap: 10px;
  padding-left: 5px;
  color: #666;
}

.shot-menu .logo {
  margin-right: -6px;
}

.mdi-min {
  width: 10px;
  height: 13px;
  margin-left: auto;
  background: #e4e4e4;
  text-align: center;
}

.ribbon {
  position: relative;
  display: flex;
  gap: 3px;
  height: 42px;
  padding: 2px 2px 1px;
  border-top: 1px solid #a8c4ee;
  background: linear-gradient(#b8d2f8, #c2d8f8);
}

.group {
  background: linear-gradient(#c8dcf8, #b4cef4);
}

.group h2 {
  height: 11px;
  background: #0078d7;
  color: #fff;
  font-size: 9px;
  font-weight: 400;
  line-height: 10px;
  text-align: center;
}

.g-nav {
  width: 151px;
}

.g-table {
  width: 185px;
}

.g-mail {
  width: 113px;
}

.g-tools {
  width: 191px;
}

.g-people {
  width: 85px;
}

.icons {
  display: flex;
  align-items: center;
  justify-content: space-evenly;
  height: 28px;
  border-left: 2px dotted #fff;
}

.ric {
  width: 26px;
  height: 26px;
}

.plate {
  border: 1px solid #a8c4ec;
  background: #c8dcf8;
}

.grey {
  background: linear-gradient(#eee, #aaa);
}

.wide {
  width: 36px;
}

.sep {
  width: 1px;
  height: 22px;
  background: #8cacdc;
}

.bell {
  display: flex;
  align-items: center;
  gap: 6px;
  width: 49px;
  height: 24px;
  padding-left: 6px;
  border: 1px solid #999;
  background: linear-gradient(#eee 45%, #aaa 55%);
}

.bell svg {
  width: 22px;
  height: 20px;
}

.mark {
  position: absolute;
  top: 5px;
  left: 685px;
  z-index: 2;
  width: 62px;
  height: 48px;
}

.shot-tabs {
  display: flex;
  align-items: flex-end;
  gap: 13px;
  height: 23px;
  padding-left: 7px;
  background: #88abe2;
}

.shot-tabs button {
  position: relative;
  height: 20px;
}

.shot-tabs .on {
  width: 70px;
}

.on svg {
  position: absolute;
  top: 0;
  left: 0;
  width: 70px;
  height: 20px;
}

.on span {
  position: relative;
}

.upper {
  display: flex;
  gap: 6px;
  height: 206px;
  padding: 6px 0 8px 7px;
  background: #d8e9fb;
}

.panel h3 {
  height: 16px;
  padding-left: 5px;
  border: 1px solid #b4bcc8;
  background: #f0f0f0;
  font-family: "Open Sans", "Noto Sans", sans-serif;
  font-size: 8px;
  line-height: 16px;
}

.clients {
  flex: 1;
}

.clients-body {
  position: relative;
  display: flex;
  justify-content: space-between;
  height: 176px;
  background: #fff;
}

.grid {
  width: 100%;
  border-spacing: 0;
  table-layout: fixed;
}

.grid th {
  height: 14px;
  padding: 0;
  border-right: 1px solid #444;
  border-bottom: 1px solid #444;
  background: #f0f0f0;
  font-weight: 400;
  line-height: 11px;
}

.grid .sorted {
  position: relative;
  background: #058005;
  color: #fff;
}

.grid .sorted::after {
  position: absolute;
  top: 2px;
  right: 2px;
  border: 2px solid transparent;
  border-top: 0;
  border-bottom: 5px solid #fff;
  content: "";
}

.grid td {
  height: 13px;
  padding: 0 0 0 1px;
  overflow: hidden;
  border-right: 1px solid #c8c8c8;
  border-bottom: 1px solid #c8c8c8;
  line-height: 11px;
  white-space: nowrap;
}

.grid .mk {
  border-color: #444;
  background: #f0f0f0;
}

.grid .white {
  background: #fff;
}

.grid .tick {
  text-align: center;
}

.mk svg {
  display: block;
  width: 5px;
  height: 8px;
}

.current td {
  background: #fde9c4;
}

.mosaic {
  display: block;
}

.w-mark {
  width: 8px;
}

.w-code {
  width: 41px;
}

.w-short {
  width: 241px;
}

.w-kind {
  width: 97px;
}

.clients .grid {
  width: calc(100% - 17px);
  height: 176px;
}

.vbar {
  display: flex;
  flex-direction: column;
  align-items: center;
  width: 11px;
  padding: 5px 0;
  background: #f0f0f0;
}

.vbar svg {
  width: 8px;
  height: 5px;
  fill: none;
  stroke: #444;
}

.vbar-thumb {
  width: 11px;
  height: 45px;
  margin: 10px 0 auto;
  background: #c4c4c4;
}

.cursor {
  position: absolute;
  top: 16px;
  right: 130px;
  width: 10px;
  height: 15px;
}

.details {
  width: 163px;
}

.details h3 {
  border-right: 0;
}

.details dl {
  display: grid;
  grid-template-columns: 40px 1fr;
  grid-auto-rows: 14px;
  column-gap: 6px;
  font-family: "Open Sans", "Noto Sans", sans-serif;
  font-size: 8px;
  font-weight: 700;
  line-height: 14px;
}

.details dt {
  text-align: right;
}

.details dd {
  color: #0000e0;
}

.d-addr {
  height: 52px;
  padding-top: 5px;
}

.d-mail {
  height: 65px;
  padding-top: 4px;
}

.d-id {
  padding-top: 3px;
}

.hsplit {
  height: 5px;
  border-bottom: 2px solid #d8e9fb;
  background: #3c60b0;
}

.hsplit i {
  display: block;
  width: 28px;
  margin: auto;
  border-top: 2px dotted #fff;
}

.lower {
  display: flex;
  height: 82px;
  padding-left: 7px;
  background: #d8e9fb;
}

.phones {
  width: 390px;
  background: #ffffe1;
}

.phones .grid {
  width: 371px;
}

.vsplit {
  width: 4px;
  margin: 0 3px 0 2px;
  background: #3c60b0;
}

.accounts {
  flex: 1;
  background: #ffffe1;
}

.w-type {
  width: 37px;
}

.w-num {
  width: 88px;
}

.w-bank {
  width: 169px;
}

.w-acc {
  width: 156px;
}

.w-def {
  width: 58px;
}

/* komunikat */
.dialog {
  width: 354px;
  margin: 30px auto 0 342px;
  border: 1px solid #a8a8a8;
  background: #fff;
  font-family: "Open Sans", "Noto Sans", sans-serif;
  font-size: 11px;
  line-height: 15px;
}

.dialog-title {
  display: flex;
  align-items: center;
  justify-content: space-between;
  height: 23px;
  padding: 0 9px 0 3px;
  color: #999;
}

.dialog-title svg {
  width: 12px;
  height: 12px;
}

.dialog-body {
  display: flex;
  gap: 10px;
  height: 75px;
  padding: 11px 10px 0 11px;
}

.dialog-body svg {
  flex: none;
  width: 30px;
  height: 30px;
}

.dialog-body p {
  padding-top: 5px;
  white-space: nowrap;
}

.dialog-foot {
  display: flex;
  justify-content: flex-end;
  padding: 9px 11px;
  border-top: 1px solid #e4e4e4;
  background: #f0f0f0;
}

.dialog-foot button {
  width: 65px;
  height: 22px;
  border: 2px solid #0078d7;
  background: #e1e1e1;
}

.scrollbar {
  display: flex;
  flex: none;
  flex-direction: column;
  align-items: center;
  width: 16px;
  padding: 17px 0;
  background: #f0f0f0;
}

.scrollbar svg {
  width: 12px;
  height: 8px;
  fill: none;
  stroke: #555;
  stroke-width: 2;
}

.thumb {
  width: 15px;
  height: 247px;
  margin: 9px 0 auto;
  background: #cdcdcd;
}
</style>
